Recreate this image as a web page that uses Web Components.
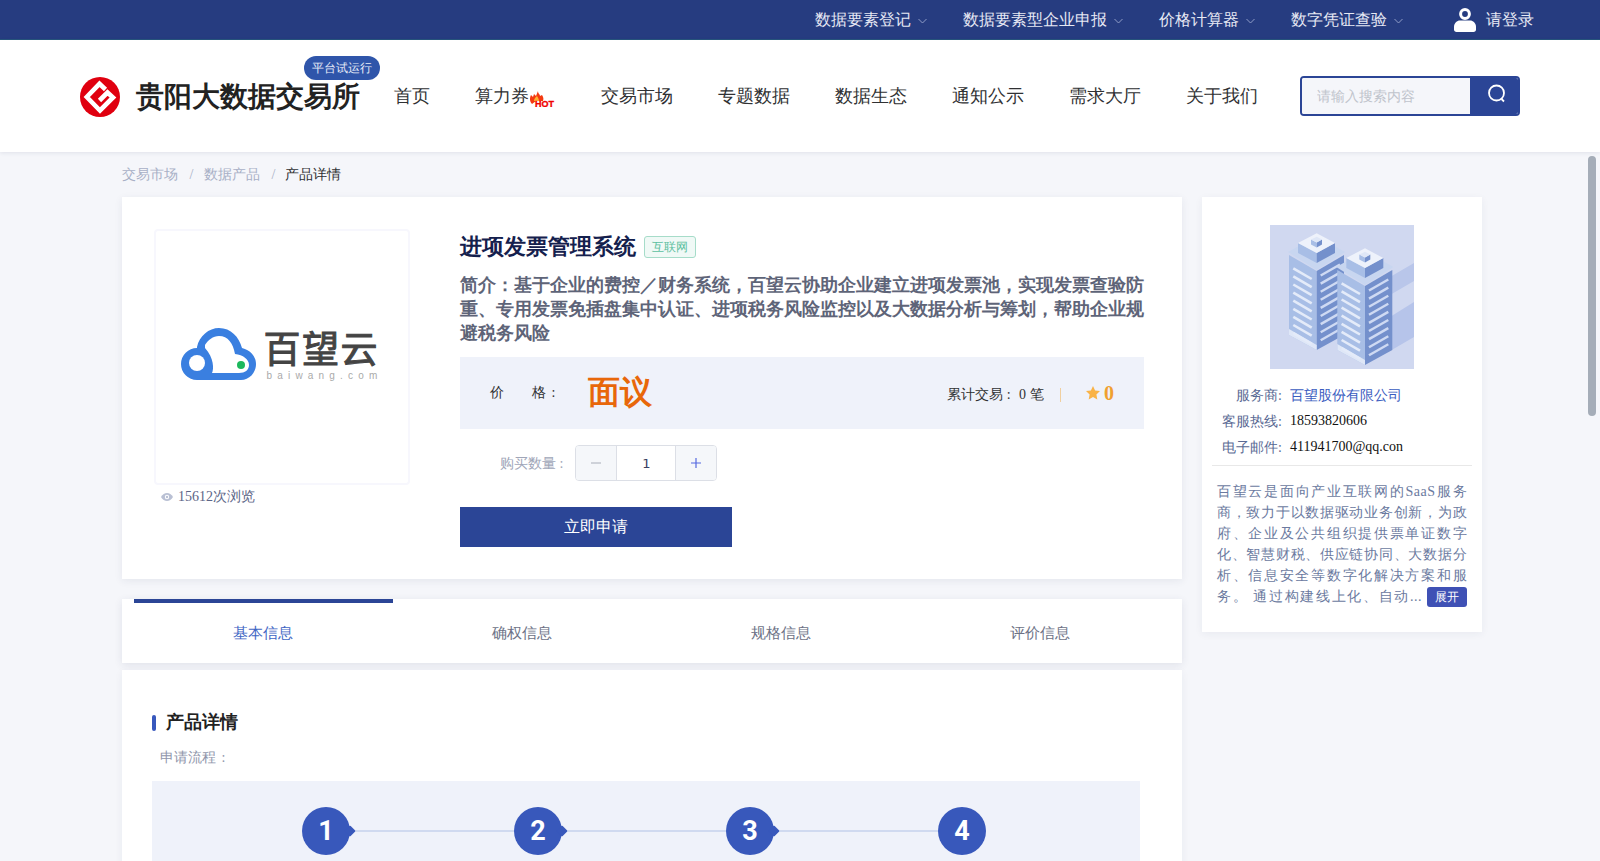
<!DOCTYPE html>
<html>
<head>
<meta charset="utf-8">
<title>进项发票管理系统</title>
<style>
  html, body { margin: 0; height: 100%; overflow: hidden; }
  body { background: #f5f6fa; font-family: "Liberation Serif", serif; font-size: 14px; color: #303133; }
</style>
</head>
<body>
<top-bar>
  <top-link>数据要素登记</top-link>
  <top-link>数据要素型企业申报</top-link>
  <top-link>价格计算器</top-link>
  <top-link>数字凭证查验</top-link>
</top-bar>
<site-header>
  <nav-link>首页</nav-link>
  <nav-link hot>算力券</nav-link>
  <nav-link>交易市场</nav-link>
  <nav-link>专题数据</nav-link>
  <nav-link>数据生态</nav-link>
  <nav-link>通知公示</nav-link>
  <nav-link>需求大厅</nav-link>
  <nav-link>关于我们</nav-link>
</site-header>
<page-scroll>
  <bread-crumb></bread-crumb>
  <page-columns>
    <product-card slot="main"></product-card>
    <product-tabs slot="main"></product-tabs>
    <product-detail slot="main"></product-detail>
    <vendor-card slot="side"></vendor-card>
  </page-columns>
</page-scroll>

<script>
// top navy strip
class TopBar extends HTMLElement {
  constructor() {
    super();
    this.attachShadow({ mode: 'open' });
    this.shadowRoot.innerHTML = `
      <style>
        :host { display: flex; justify-content: flex-end; align-items: center; box-sizing: border-box; height: 40px; padding-right: 66px; background: #263c80; border-bottom: 1px solid #27567c; color: #e6e9f4; font-size: 16px; }
        .links { display: flex; gap: 36px; }
        .user { display: flex; align-items: center; gap: 10px; margin-left: 51px; }
        .user span { margin-top: 2px; }
        svg { display: block; }
      </style>
      <div class="links"><slot></slot></div>
      <div class="user">
        <svg width="22" height="24" viewBox="0 0 22 24"><circle cx="11" cy="6" r="4.4" fill="none" stroke="#fff" stroke-width="3"/><path d="M0 19c0-4 3-6.500 6-6.500h10c3 0 6 2.500 6 6.500v2.500c0 1.500-1 2.500-2.500 2.500h-17C1 24 0 23 0 21.500z" fill="#fff"/></svg>
        <span>请登录</span>
      </div>`;
  }
}
customElements.define('top-bar', TopBar);

class TopLink extends HTMLElement {
  constructor() {
    super();
    this.attachShadow({ mode: 'open' });
    this.shadowRoot.innerHTML = `
      <style>
        :host { display: flex; align-items: center; gap: 7px; line-height: 24px; }
        svg { display: block; margin-top: 2px; }
      </style>
      <slot></slot>
      <svg width="9" height="6" viewBox="0 0 9 6"><path d="M.5 1l4 4 4-4" fill="none" stroke="#8f9cc6" stroke-width="1"/></svg>`;
  }
}
customElements.define('top-link', TopLink);

// logo, main menu and search
class SiteHeader extends HTMLElement {
  constructor() {
    super();
    this.attachShadow({ mode: 'open' });
    this.shadowRoot.innerHTML = `
      <style>
        :host { display: flex; align-items: center; position: relative; z-index: 2; box-sizing: border-box; height: 112px; padding-left: 80px; background: #fff; box-shadow: 0 1px 4px rgba(40,50,90,.1); }
        .brand { display: flex; align-items: center; gap: 16px; position: relative; margin-top: 2px; }
        .brand svg { display: block; }
        h1 { margin: 0; font-size: 28px; font-weight: 700; line-height: 40px; color: #222; }
        .badge { position: absolute; left: 224px; top: -21px; width: 76px; height: 24px; border-radius: 12px; background: #2f55aa; color: #e8ecf8; font-size: 12px; line-height: 24px; text-align: center; }
        nav { display: flex; gap: 45px; margin-left: 34px; }
        .search { display: flex; box-sizing: border-box; width: 220px; height: 40px; margin-left: 42px; border: 2px solid #2b4596; border-radius: 4px; overflow: hidden; }
        input { flex: 1; min-width: 0; box-sizing: border-box; padding: 1px 15px 0; border: 0; outline: 0; background: #f5f6fa; font: 14px "Liberation Serif", serif; }
        input::placeholder { color: #c0c4cc; opacity: 1; }
        .go { display: flex; align-items: center; justify-content: center; width: 48px; background: #2b4596; }
        .go svg { margin: 0 0 5px 5px; }
      </style>
      <div class="brand">
        <svg width="40" height="40" viewBox="0 0 40 40"><circle cx="20" cy="20" r="20" fill="#e0000f"/><path d="M25.500 12.500L19.500 6.800 6.800 20 20 33.500 33 20.500 27.500 15.500 19.500 23.500" fill="none" stroke="#fff" stroke-width="4.600"/></svg>
        <h1>贵阳大数据交易所</h1>
        <span class="badge">平台试运行</span>
      </div>
      <nav><slot></slot></nav>
      <div class="search">
        <input placeholder="请输入搜索内容">
        <div class="go"><svg width="20" height="20" viewBox="0 0 20 20"><circle cx="9.500" cy="9" r="7.500" fill="none" stroke="#fff" stroke-width="1.800"/><path d="M14.500 15l2.500 2.500" stroke="#fff" stroke-width="1.800"/></svg></div>
      </div>`;
  }
}
customElements.define('site-header', SiteHeader);

class NavLink extends HTMLElement {
  constructor() {
    super();
    this.attachShadow({ mode: 'open' });
    const hot = this.hasAttribute('hot') ? `
      <svg width="27" height="16" viewBox="0 0 27 16">
        <path d="M3 13C0 10 1 6 2 4l2 2 1-3 2 2 2-5c0 3 2 3 2 5l2-1c1 2 2 3 1 6H7z" fill="#f43a10"/>
        <path d="M5 10c0-2 1-3 3-5 1 2 2 3 2 5z" fill="#ffb030"/>
        <text x="6" y="15.500" font-family="Liberation Sans" font-weight="700" font-size="8.500" fill="#f00000" stroke="#f00000" stroke-width=".3" textLength="19" lengthAdjust="spacingAndGlyphs">HOT</text>
      </svg>` : '';
    this.shadowRoot.innerHTML = `
      <style>
        :host { display: flex; align-items: center; height: 30px; font-size: 18px; color: #303133; }
        svg { display: block; margin-top: 6px; }
      </style>
      <slot></slot>${hot}`;
  }
}
customElements.define('nav-link', NavLink);

// everything under the header scrolls on its own, the thumb is drawn by hand
class PageScroll extends HTMLElement {
  constructor() {
    super();
    this.attachShadow({ mode: 'open' });
    this.shadowRoot.innerHTML = `
      <style>
        :host { display: block; position: relative; height: calc(100vh - 152px); }
        .scroll { height: 100%; overflow-y: auto; scrollbar-width: none; }
        .inner { box-sizing: border-box; min-height: 1923px; padding-left: 122px; }
        .thumb { position: absolute; top: 4px; right: 4px; width: 8px; height: 260px; border-radius: 4px; background: #a5adb8; }
      </style>
      <div class="scroll"><div class="inner"><slot></slot></div></div>
      <div class="thumb"></div>`;
  }

  connectedCallback() {
    const box = this.shadowRoot.querySelector('.scroll');
    const thumb = this.shadowRoot.querySelector('.thumb');
    box.addEventListener('scroll', () => {
      thumb.style.transform = `translateY(${box.scrollTop * 705 / box.scrollHeight}px)`;
    });
  }
}
customElements.define('page-scroll', PageScroll);

class BreadCrumb extends HTMLElement {
  constructor() {
    super();
    this.attachShadow({ mode: 'open' });
    this.shadowRoot.innerHTML = `
      <style>
        :host { display: flex; align-items: center; height: 45px; color: #a8b0c6; font-size: 14px; }
        i { font-style: normal; margin: 0 10.500px 0 11.500px; }
        b { font-weight: 400; color: #303133; margin-left: -1px; }
      </style>
      <span>交易市场</span><i>/</i><span>数据产品</span><i>/</i><b>产品详情</b>`;
  }
}
customElements.define('bread-crumb', BreadCrumb);

class PageColumns extends HTMLElement {
  constructor() {
    super();
    this.attachShadow({ mode: 'open' });
    this.shadowRoot.innerHTML = `
      <style>
        :host { display: flex; align-items: flex-start; gap: 20px; }
        .main { width: 1060px; }
        .side { width: 280px; }
      </style>
      <div class="main"><slot name="main"></slot></div>
      <div class="side"><slot name="side"></slot></div>`;
  }
}
customElements.define('page-columns', PageColumns);

class ProductCard extends HTMLElement {
  constructor() {
    super();
    this.attachShadow({ mode: 'open' });
    this.shadowRoot.innerHTML = `
      <style>
        :host { display: flex; gap: 50px; box-sizing: border-box; height: 382px; padding: 32px 38px 0 32px; background: #fff; box-shadow: 0 2px 8px rgba(40,50,90,.08); }
        .pic { width: 256px; }
        .frame { display: flex; align-items: center; justify-content: center; gap: 7px; box-sizing: border-box; height: 256px; padding: 0 0 6px 0; border: 2px solid #f7f7fd; border-radius: 4px; }
        .frame svg { display: block; }
        .word { display: flex; flex-direction: column; color: #444; }
        .word b { font: 400 37px/41px "Noto Sans CJK SC", sans-serif; -webkit-text-stroke: 1px #444; letter-spacing: 1.500px; }
        .word span { margin: 2px 0 0 3px; font: 10px/11px "Liberation Sans", sans-serif; letter-spacing: 5.200px; color: #aaa; white-space: nowrap; }
        .views { display: flex; align-items: center; gap: 5px; height: 20px; margin-top: 2px; padding-left: 7px; color: #5c6587; }
        .info { flex: 1; min-width: 0; }
        .title { display: flex; align-items: center; gap: 8px; height: 36px; }
        h2 { margin: 0; font-size: 22px; line-height: 36px; color: #14204d; }
        .tag { box-sizing: border-box; width: 52px; height: 22px; border: 1px solid #a6dcc9; border-radius: 3px; background: #f0f9f6; color: #5cc0a0; font-size: 12px; line-height: 20px; text-align: center; }
        .intro { margin: 8px 0 0; font-size: 18px; font-weight: 700; line-height: 24px; color: #5e6478; }
        .band { display: flex; align-items: center; height: 72px; margin-top: 12px; padding: 0 30px; background: #eff2fa; }
        .label { display: flex; gap: 28px; width: 98px; word-spacing: 2px; }
        .price { font-size: 32px; font-weight: 700; color: #e8670a; }
        .deal { margin: 3px 0 0 auto; word-spacing: .6px; }
        .sep { width: 1px; height: 14px; margin: 4px 25px 0 16px; background: #f0cf9f; }
        .score { display: flex; align-items: center; gap: 4px; font-size: 20px; font-weight: 700; color: #f0a030; }
        .qty { display: flex; align-items: center; height: 36px; margin-top: 16px; padding-left: 40px; gap: 12px; color: #a0a6b8; }
        .qty span { margin-top: 2px; }
        .btn { display: block; width: 272px; height: 40px; margin-top: 26px; background: #2b4596; color: #fff; font-size: 16px; line-height: 40px; text-align: center; }
      </style>
      <div class="pic">
        <div class="frame">
          <svg width="75" height="52" viewBox="0 0 75 52">
            <path d="M16 19C18 8 28 0 38 0c12 0 20 9 23 20 8 2 14 8 14 16 0 9-7 16-15 16H16a16 16 0 0 1 0-32z" fill="#3a7fe0"/>
            <path d="M24 17c3-5 8-9 14-9 9 0 14 7 16 18 8 1 14 5 14 11 0 5-4 8-10 8H31c2-4 2-15-7-25z" fill="#fff"/>
            <circle cx="16" cy="35" r="8" fill="#fff"/>
            <circle cx="60" cy="37" r="4" fill="#1cb85c"/>
          </svg>
          <div class="word"><b>百望云</b><span>baiwang.com</span></div>
        </div>
        <div class="views">
          <svg width="12" height="8" viewBox="0 0 12 8"><path d="M0 4c3-5.300 9-5.300 12 0-3 5.300-9 5.300-12 0z" fill="#b9c0d4"/><circle cx="6" cy="4" r="2.200" fill="#fff"/><circle cx="6" cy="4" r="1.200" fill="#b9c0d4"/></svg>
          <span>15612次浏览</span>
        </div>
      </div>
      <div class="info">
        <div class="title"><h2>进项发票管理系统</h2><span class="tag">互联网</span></div>
        <p class="intro">简介：基于企业的费控／财务系统，百望云协助企业建立进项发票池，实现发票查验防重、专用发票免插盘集中认证、进项税务风险监控以及大数据分析与筹划，帮助企业规避税务风险</p>
        <div class="band">
          <span class="label"><span>价</span><span>格 :</span></span>
          <span class="price">面议</span>
          <span class="deal">累计交易 :&nbsp;&nbsp;0 笔</span>
          <span class="sep"></span>
          <span class="score"><svg width="14" height="14" viewBox="0 0 14 14"><path d="M7 0l2.100 4.500 4.900.6-3.600 3.400.9 4.900L7 11l-4.300 2.400.9-4.900L0 5.100l4.900-.6z" fill="#f9b347"/></svg>0</span>
        </div>
        <div class="qty"><span>购买数量 :</span><num-stepper></num-stepper></div>
        <a class="btn">立即申请</a>
      </div>`;
  }
}
customElements.define('product-card', ProductCard);

class NumStepper extends HTMLElement {
  constructor() {
    super();
    this.attachShadow({ mode: 'open' });
    this.shadowRoot.innerHTML = `
      <style>
        :host { display: flex; box-sizing: border-box; width: 142px; height: 36px; border: 1px solid #dcdfe6; border-radius: 4px; overflow: hidden; }
        div { display: flex; align-items: center; justify-content: center; }
        .ctl { width: 40px; background: #f5f7fa; }
        .val { flex: 1; border: solid #dcdfe6; border-width: 0 1px; color: #3a4060; font-family: "DejaVu Sans", sans-serif; font-size: 13px; }
      </style>
      <div class="ctl"><svg width="12" height="12" viewBox="0 0 12 12"><path d="M1 6h10" stroke="#a8adb8" stroke-width="1"/></svg></div>
      <div class="val">1</div>
      <div class="ctl"><svg width="12" height="12" viewBox="0 0 12 12"><path d="M1 6h10M6 1v10" stroke="#5568e0" stroke-width="1.200"/></svg></div>`;
  }
}
customElements.define('num-stepper', NumStepper);

class ProductTabs extends HTMLElement {
  constructor() {
    super();
    this.attachShadow({ mode: 'open' });
    this.shadowRoot.innerHTML = `
      <style>
        :host { display: flex; box-sizing: border-box; height: 64px; margin-top: 20px; padding: 0 12px; background: #fff; box-shadow: 0 2px 8px rgba(40,50,90,.1); }
        div { flex: 1; box-sizing: border-box; padding-right: 2px; border-top: 4px solid transparent; color: #6d7286; font-size: 15px; line-height: 60px; text-align: center; }
        .on { border-top-color: #2b4596; color: #3f66c4; }
      </style>
      <div class="on">基本信息</div><div>确权信息</div><div>规格信息</div><div>评价信息</div>`;
  }
}
customElements.define('product-tabs', ProductTabs);

class ProductDetail extends HTMLElement {
  constructor() {
    super();
    this.attachShadow({ mode: 'open' });
    this.shadowRoot.innerHTML = `
      <style>
        :host { display: block; box-sizing: border-box; margin-top: 7px; padding: 40px 30px 0; background: #fff; box-shadow: 0 2px 8px rgba(40,50,90,.06); }
        h3 { display: flex; align-items: center; gap: 10px; height: 26px; margin: 0; font-size: 18px; line-height: 26px; color: #222; }
        h3::before { content: ""; width: 4px; height: 16px; border-radius: 2px; background: #3858bd; }
        h3 span { margin-bottom: 2px; }
        p { margin: 10px 0 0 8px; color: #9096ab; line-height: 24px; word-spacing: 2px; }
        .flow { display: flex; height: 300px; margin: 11px 12px 0 0; padding: 26px 0 0 150px; background: #eff2fa; }
      </style>
      <h3><span>产品详情</span></h3>
      <p>申请流程 :</p>
      <div class="flow">
        <flow-step>1</flow-step><flow-step>2</flow-step><flow-step>3</flow-step><flow-step last>4</flow-step>
      </div>`;
  }
}
customElements.define('product-detail', ProductDetail);

class FlowStep extends HTMLElement {
  constructor() {
    super();
    this.attachShadow({ mode: 'open' });
    const last = this.hasAttribute('last');
    this.shadowRoot.innerHTML = `
      <style>
        :host { display: flex; flex: none; align-items: center; width: 212px; height: 48px; }
        .dot { flex: none; position: relative; width: 48px; height: 48px; border-radius: 50%; background: #3858bb; color: #fff; font: 700 27px/48px Roboto, sans-serif; text-align: center; }
        .tip { position: absolute; right: -4px; top: 20px; width: 8px; height: 8px; border-radius: 1px; background: #3858bb; transform: rotate(45deg); }
        .line { flex: 1; height: 2px; background: #d0daf0; }
      </style>
      <div class="dot"><slot></slot>${last ? '' : '<span class="tip"></span>'}</div>
      ${last ? '' : '<div class="line"></div>'}`;
  }
}
customElements.define('flow-step', FlowStep);

class VendorCard extends HTMLElement {
  constructor() {
    super();
    this.attachShadow({ mode: 'open' });
    // one tower, the second is the same one moved
    let stripes = '';
    for (let i = 0; i < 9; i++) {
      const y = i * 8.1;
      stripes += `<path d="M23.300 ${43.3 + y}L41.700 ${54 + y}" stroke="#e4ebf9" stroke-width="2.600"/>`;
      stripes += `<path d="M50.700 ${50.5 + y}L70 ${39.5 + y}" stroke="#cfdaf3" stroke-width="2.400"/>`;
    }
    this.shadowRoot.innerHTML = `
      <style>
        :host { display: block; box-sizing: border-box; height: 435px; padding-top: 28px; background: #fff; box-shadow: 0 2px 8px rgba(40,50,90,.06); }
        svg { display: block; margin: 0 auto; }
        dl { display: grid; grid-template-columns: 80px 1fr; column-gap: 8px; margin: 14px 0 0; line-height: 26px; }
        dt { text-align: right; color: #5a6a94; }
        dd { margin: 0; color: #111; white-space: nowrap; line-height: 24px; }
        dd.link { color: #3a5cc0; line-height: 26px; }
        hr { height: 1px; margin: 4px 10px 0; border: 0; background: #e8e8e8; }
        .desc { width: 250px; margin: 15px 0 0 15px; color: #6b7aa0; font-size: 14px; line-height: 21px; letter-spacing: .5px; text-align: justify; text-align-last: justify; }
        p { margin: 0; }
        .more { display: flex; align-items: center; gap: 5px; }
        .more span { flex: 1; min-width: 0; }
        a { flex: none; width: 40px; height: 20px; border-radius: 3px; background: #3f51b5; color: #fff; font-size: 12px; line-height: 20px; letter-spacing: 0; text-align: center; text-align-last: center; }
      </style>
      <svg width="144" height="144" viewBox="0 0 144 144">
        <defs>
          <g id="tower">
            <path d="M19 30l27.700 16v79L19 110z" fill="#a8bee6"/>
            <path d="M46.700 46L74 30v80l-27.300 15z" fill="#7490cc"/>
            <path d="M19 104l27.700 16v5L19 110z" fill="#dfe7f7"/>
            ${stripes}
            <path d="M18 27l28.700-16L75 27 46.700 45z" fill="#c8d6f0"/>
            <path d="M28 18l18.700 10v10L28 28z" fill="#a8bee6"/>
            <path d="M65 18L46.700 28v10L65 28z" fill="#7490cc"/>
            <path d="M28 18L46.700 8.300 65 18 46.700 28z" fill="#eef2fb"/>
            <path d="M41 14.500l5.700 3v5l-5.700-3z" fill="#a8bee6"/>
            <path d="M52 14.500l-5.300 3v5l5.300-3z" fill="#7490cc"/>
            <path d="M41 14.500l5.700-2.800 5.300 2.800-5.300 3z" fill="#dfe7f7"/>
          </g>
        </defs>
        <rect width="144" height="144" fill="#d0d8f0"/>
        <path d="M120 52l24-14v18l-24 14z" fill="#b9c6ea"/>
        <path d="M120 92l24-15v35l-24 14z" fill="#b6c4ea"/>
        <use href="#tower"/>
        <use href="#tower" x="48.300" y="15"/>
      </svg>
      <dl>
        <dt>服务商:</dt><dd class="link">百望股份有限公司</dd>
        <dt>客服热线:</dt><dd>18593820606</dd>
        <dt>电子邮件:</dt><dd>411941700@qq.con</dd>
      </dl>
      <hr>
      <div class="desc">
        <p>百望云是面向产业互联网的SaaS服务商，致力于以数据驱动业务创新，为政府、企业及公共组织提供票单证数字化、智慧财税、供应链协同、大数据分析、信息安全等数字化解决方案和服</p>
        <div class="more"><span>务。 通过构建线上化、自动...</span><a>展开</a></div>
      </div>`;
  }
}
customElements.define('vendor-card', VendorCard);
</script>
</body>
</html>
